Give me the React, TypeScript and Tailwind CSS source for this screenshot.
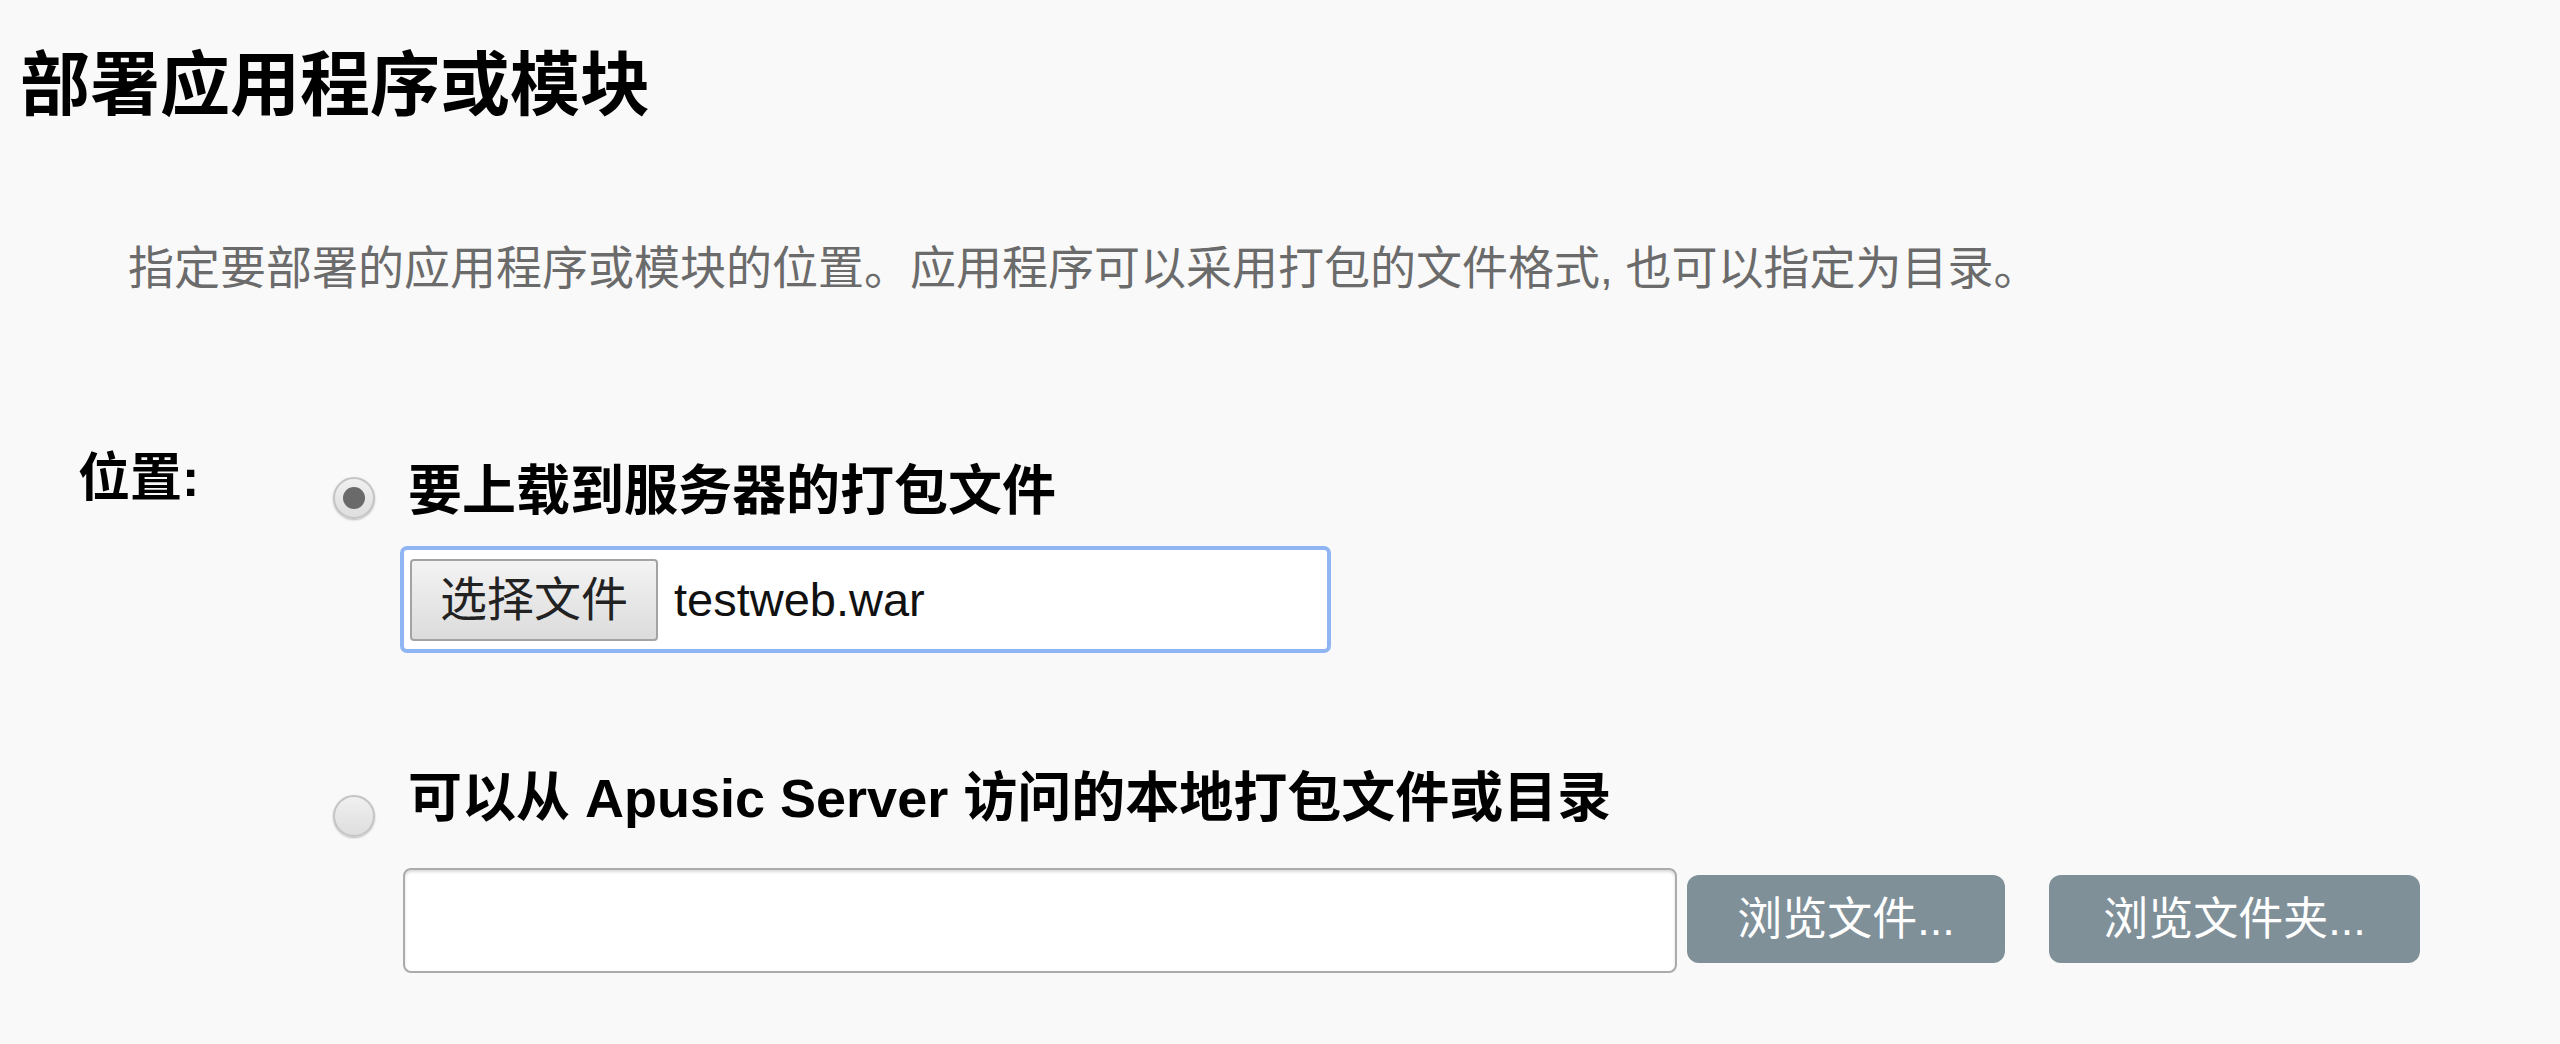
const font = "[font-family:'Liberation_Sans','Noto_Sans_CJK_SC',sans-serif]";

const Radio = ({ checked, className }: { checked?: boolean; className?: string }) => (
  <span
    className={`flex h-[42px] w-[42px] shrink-0 items-center justify-center rounded-full border-2 border-[#c4c4c4] bg-gradient-to-b from-[#f0f0f0] to-[#dedede] shadow-[0_1px_2px_rgba(0,0,0,0.25)] ${className ?? ""}`}
  >
    {checked && <span className="h-[22px] w-[22px] rounded-full bg-[#6a6a6a]" />}
  </span>
);

const App = () => {
  return (
    <div className={`min-h-screen bg-[#f9f9f9] text-black ${font}`}>
      <h1 className="pl-[20px] pt-[51px] text-[70px] font-bold leading-none">部署应用程序或模块</h1>

      <p className="mt-[124px] pl-[128px] text-[46px] leading-none text-[#6b6b6b]">
        指定要部署的应用程序或模块的位置。应用程序可以采用打包的文件格式, 也可以指定为目录。
      </p>

      <div className="mt-[161px] flex">
        <div className="w-[333px] pl-[78px] text-[52px] font-bold leading-none">位置:</div>

        <div className="flex flex-col pt-[12px]">
          {/* Upload option */}
          <div className="flex items-start">
            <Radio checked className="mt-[13px]" />
            <span className="ml-[33px] text-[54px] font-bold leading-none">要上载到服务器的打包文件</span>
          </div>
          <div className="ml-[67px] mt-[27px] flex h-[107px] w-[931px] items-center rounded-[7px] border-[4px] border-[#8fb6f2] bg-white pl-[6px]">
            <button className="flex h-[82px] items-center rounded-[4px] border-2 border-[#a3a3a3] bg-gradient-to-b from-[#f3f3f3] to-[#dcdcdc] px-[28px] text-[47px] leading-none text-[#222]">
              选择文件
            </button>
            <span className="ml-[16px] text-[47px] leading-none text-[#111]">testweb.war</span>
          </div>

          {/* Local option */}
          <div className="mt-[118px] flex items-start">
            <Radio className="mt-[24px]" />
            <span className="ml-[33px] text-[54px] font-bold leading-none">
              可以从 Apusic Server 访问的本地打包文件或目录
            </span>
          </div>
          <div className="ml-[70px] mt-[31px] flex items-start">
            <input
              type="text"
              className="h-[105px] w-[1274px] rounded-[8px] border-2 border-[#ababab] bg-white shadow-[inset_0_2px_3px_rgba(0,0,0,0.15)] outline-none"
            />
            <button className="ml-[10px] mt-[7px] h-[88px] w-[318px] rounded-[12px] bg-[#7f9099] text-[45px] leading-none text-white">
              浏览文件...
            </button>
            <button className="ml-[44px] mt-[7px] h-[88px] w-[371px] rounded-[12px] bg-[#7f9099] text-[45px] leading-none text-white">
              浏览文件夹...
            </button>
          </div>
        </div>
      </div>
    </div>
  );
};

export default App;
